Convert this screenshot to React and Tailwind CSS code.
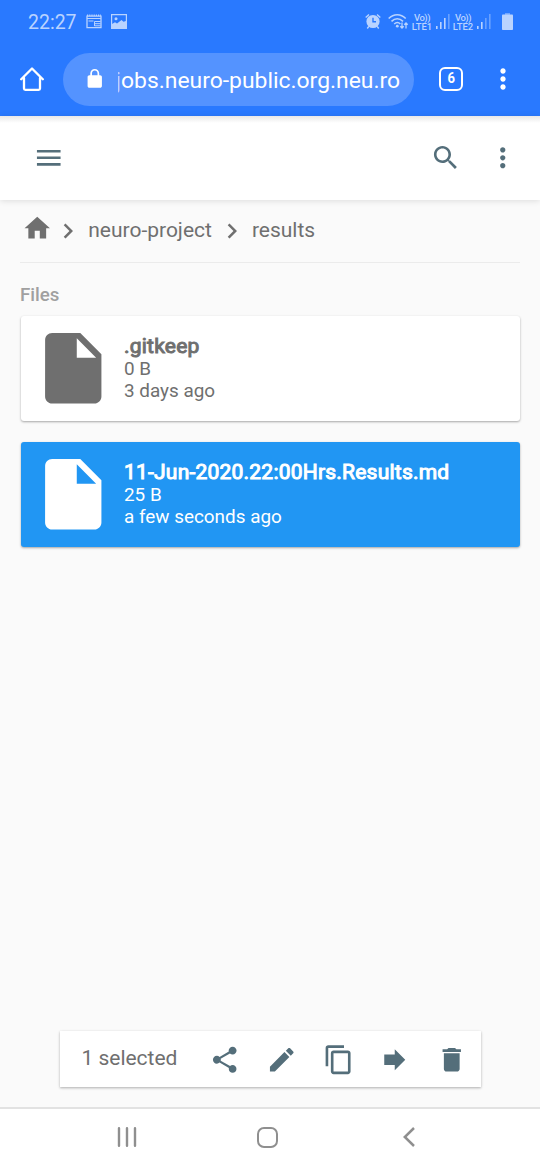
import React from "react";

const PATHS = {
  menu: "M3 18h18v-2H3v2zm0-5h18v-2H3v2zm0-7v2h18V6H3z",
  search:
    "M15.5 14h-.79l-.28-.27C15.41 12.59 16 11.11 16 9.5 16 5.91 13.09 3 9.5 3S3 5.91 3 9.5 5.91 16 9.5 16c1.61 0 3.09-.59 4.23-1.57l.27.28v.79l5 4.99L20.49 19l-4.99-5zm-6 0C7.01 14 5 11.99 5 9.5S7.01 5 9.5 5 14 7.01 14 9.5 11.99 14 9.5 14z",
  more: "M12 8c1.1 0 2-.9 2-2s-.9-2-2-2-2 .9-2 2 .9 2 2 2zm0 2c-1.1 0-2 .9-2 2s.9 2 2 2 2-.9 2-2-.9-2-2-2zm0 6c-1.1 0-2 .9-2 2s.9 2 2 2 2-.9 2-2-.9-2-2-2z",
  home: "M10 20v-6h4v6h5v-8h3L12 3 2 12h3v8z",
  chevron: "M10 6L8.59 7.41 13.17 12l-4.58 4.59L10 18l6-6z",
  file: "M6 2c-1.1 0-1.99.9-1.99 2L4 20c0 1.1.89 2 1.99 2H18c1.1 0 2-.9 2-2V8l-6-6H6zm7 7V3.5L18.5 9H13z",
  share:
    "M18 16.08c-.76 0-1.44.3-1.96.77L8.91 12.7c.05-.23.09-.46.09-.7s-.04-.47-.09-.7l7.05-4.11c.54.5 1.25.81 2.04.81 1.66 0 3-1.34 3-3s-1.34-3-3-3-3 1.34-3 3c0 .24.04.47.09.7L8.04 9.81C7.5 9.31 6.79 9 6 9c-1.66 0-3 1.34-3 3s1.34 3 3 3c.79 0 1.5-.31 2.04-.81l7.12 4.16c-.05.21-.08.43-.08.65 0 1.61 1.31 2.92 2.92 2.92 1.61 0 2.92-1.31 2.92-2.92s-1.31-2.92-2.92-2.92z",
  edit: "M3 17.25V21h3.75L17.81 9.94l-3.75-3.75L3 17.25zM20.71 7.04c.39-.39.39-1.02 0-1.41l-2.34-2.34c-.39-.39-1.02-.39-1.41 0l-1.83 1.83 3.75 3.75 1.83-1.83z",
  copy: "M16 1H4c-1.1 0-2 .9-2 2v14h2V3h12V1zm3 4H8c-1.1 0-2 .9-2 2v14c0 1.1.9 2 2 2h11c1.1 0 2-.9 2-2V7c0-1.1-.9-2-2-2zm0 16H8V7h11v14z",
  forward: "M12 8V4l8 8-8 8v-4H4V8z",
  trash: "M6 19c0 1.1.9 2 2 2h8c1.1 0 2-.9 2-2V7H6v12zM19 4h-3.5l-1-1h-5l-1 1H5v2h14V4z",
  lock: "M18 8h-1V6c0-2.76-2.24-5-5-5S7 3.24 7 6v2H6c-1.1 0-2 .9-2 2v10c0 1.1.9 2 2 2h12c1.1 0 2-.9 2-2V10c0-1.1-.9-2-2-2zM8.9 8V6c0-1.71 1.39-3.1 3.1-3.1s3.1 1.39 3.1 3.1v2z",
};

function Icon({ name, className }) {
  return (
    <svg viewBox="0 0 24 24" fill="currentColor" className={"shrink-0 " + className}>
      <path d={PATHS[name]} fillRule="evenodd" />
    </svg>
  );
}

function Signal({ bars }) {
  return (
    <svg viewBox="0 0 14 15" className="h-[15px] w-[14px] shrink-0" fill="currentColor">
      {[0, 1, 2, 3].map((i) => (
        <rect key={i} x={i * 4} y={12 - i * 4} width="1.6" height={3 + i * 4} opacity={i < bars ? 1 : 0.45} />
      ))}
    </svg>
  );
}

function Carrier({ label }) {
  return (
    <div className="flex w-[20px] flex-col items-center text-[9.5px] leading-[9px] font-medium">
      <span className="tracking-[-0.5px]">Vo))</span>
      <span className="whitespace-nowrap">{label}</span>
    </div>
  );
}

function StatusBar() {
  return (
    <div className="flex h-[43px] items-center pl-7 text-[#b9d3ff]">
      <span className="w-[58px] pt-[3px] text-[19.5px] leading-6">22:27</span>
      <svg viewBox="0 0 16 15" className="h-[15px] w-4 shrink-0" fill="none" stroke="currentColor">
        <path d="M1 2.2h14v11.5H1z" strokeWidth="1.3" />
        <path d="M1 1.2h14" strokeWidth="1.5" strokeDasharray="1.2 1" />
        <path d="M1 4.5h14M2.5 7h5M8.5 7.5h6M8.5 9.7h6M8.5 11.8h6M8.500 7.500v4.500" strokeWidth="1" />
      </svg>
      <svg viewBox="0 0 16 15" className="ml-[9px] h-[15px] w-4 shrink-0" fill="currentColor">
        <path d="M.6.6h14.8v13.800H.6z" fill="none" stroke="currentColor" strokeWidth="1.2" />
        <circle cx="5" cy="4.7" r="1.5" />
        <path d="M1 14v-4l3-1.800 2 1.300 4.500-3.500 2 1.700L15 7v7z" />
      </svg>
      <div className="ml-[238px] flex items-center">
        <svg viewBox="0 0 16 17" className="h-[17px] w-4 shrink-0" fill="none" stroke="currentColor">
          <circle cx="8" cy="8.5" r="6.6" fill="currentColor" stroke="none" />
          <path d="M8 4.8v4h3" stroke="#2979ff" strokeWidth="1.4" />
          <path d="M.7 4.500 4 1.500M15.300 4.500 12 1.500M3.800 13.300l-1.500 2.200M12.200 13.300l1.500 2.200" strokeWidth="1.4" />
        </svg>
        <svg viewBox="0 0 21 17" className="ml-[7px] h-[17px] w-[21px] shrink-0" fill="none" stroke="currentColor" strokeWidth="1.6">
          <path d="M.7 5.500c5-5 12-5 17 0M3.500 8.300c3.500-3.300 8-3.300 11.500 0M6.200 11c2-1.900 4.200-1.900 6.200 0" />
          <circle cx="9.3" cy="13.2" r="1.4" fill="currentColor" stroke="none" />
          <path d="M14 9.500v5.500M12.300 13.300l1.700 1.800 1.700-1.800M18 15.500V10M16.300 11.700 18 9.900l1.700 1.800" strokeWidth="1.3" />
        </svg>
        <div className="ml-[3px]"><Carrier label="LTE1" /></div>
        <div className="ml-[4px]"><Signal bars={3} /></div>
        <div className="ml-[3px]"><Carrier label="LTE2" /></div>
        <div className="ml-[4px]"><Signal bars={2} /></div>
        <svg viewBox="0 0 11 17" className="ml-[11px] h-[17px] w-[11px] shrink-0" fill="currentColor">
          <path d="M3 0h5v2H3z" opacity=".5" />
          <rect y="1.5" width="11" height="15.5" rx=".8" />
        </svg>
      </div>
    </div>
  );
}

function BrowserBar() {
  return (
    <div className="flex h-[73px] items-start pt-[10px] pl-5 text-white">
      <div className="flex h-[52px] w-[43px] items-center">
        <svg viewBox="0 0 24 24" className="h-6 w-6" fill="none" stroke="currentColor" strokeWidth="2.3" strokeLinejoin="round" strokeLinecap="round">
          <path d="M1.200 12.300 12 1.500l10.800 10.800M4 11v10.500q0 1.300 1.300 1.300h13.400q1.300 0 1.300-1.300V11" />
        </svg>
      </div>
      <div className="flex h-[52.5px] w-[351px] items-center rounded-full bg-[#5493ff] pl-[21px]">
        <Icon name="lock" className="-mt-px h-[21.5px] w-[21.5px]" />
        <div className="ml-[12.5px] flex items-center pt-[3px] text-[22.9px] leading-7 whitespace-nowrap">
          <span className="flex w-[3px] justify-end overflow-hidden opacity-60">j</span>
          <span>obs.neuro-public.org.neu.ro</span>
        </div>
      </div>
      <div className="ml-[25px] flex h-[52px] items-center">
        <div className="flex h-6 w-6 items-center justify-center rounded-[6px] border-2 border-white text-[14.5px] leading-none font-bold">
          <span className="scale-x-90">6</span>
        </div>
      </div>
      <div className="ml-[24px] flex h-[52.5px] items-center">
        <Icon name="more" className="h-8 w-8" />
      </div>
    </div>
  );
}

function FileCard({ name, size, date, selected }) {
  return (
    <div
      className={
        "flex h-[105px] rounded-[3px] pt-[10px] pl-[10px] shadow-[0_1px_3px_rgba(0,0,0,0.16),0_1px_2px_rgba(0,0,0,0.2)] " +
        (selected ? "bg-[#2196f3] text-white" : "bg-white text-[#6f6f6f]")
      }
    >
      <Icon name="file" className="ml-[0.4px] h-[84.5px] w-[84.5px]" />
      <div className="ml-[8.1px] pt-[8px]">
        <div className="text-[21px] leading-6 tracking-[0.22px] [-webkit-text-stroke:1px_currentColor]">{name}</div>
        <div className="text-[18.9px] leading-[21.5px]">{size}</div>
        <div className="text-[18.9px] leading-[21.5px]">{date}</div>
      </div>
    </div>
  );
}

export default function App() {
  return (
    <div className="flex h-[1170px] w-[540px] flex-col overflow-hidden bg-[#fafafa] font-['Roboto',sans-serif]">
      <div className="bg-[#2979ff]">
        <StatusBar />
        <BrowserBar />
      </div>
      <header className="flex h-[84px] items-center justify-between bg-white bg-linear-to-b from-[#e8e8e8] to-white to-[7px] pr-[22px] pl-[33.4px] text-[#546e7a] shadow-[0_1px_6px_rgba(0,0,0,0.12)]">
        <Icon name="menu" className="h-[31.5px] w-[31.5px]" />
        <div className="flex gap-[25.5px]">
          <Icon name="search" className="h-[31.5px] w-[31.5px]" />
          <Icon name="more" className="h-[31.5px] w-[31.5px]" />
        </div>
      </header>
      <main className="flex flex-1 flex-col px-5">
        <nav className="flex h-[63px] items-center border-b border-[#ebebeb] pl-[1.5px] text-[21px] text-[#6f6f6f]">
          <Icon name="home" className="-mt-[6px] h-[30.5px] w-[30.5px]" />
          <Icon name="chevron" className="ml-[1.2px] -mt-px h-[30px] w-[30px]" />
          <span className="ml-[5px] w-[124px] whitespace-nowrap">neuro-project</span>
          <Icon name="chevron" className="ml-[5px] -mt-px h-[30px] w-[30px]" />
          <span className="ml-[4.7px]">results</span>
        </nav>
        <h2 className="mt-[20px] h-[33px] text-[18.7px] leading-6 font-medium text-[#a0a0a0]">Files</h2>
        <div className="ml-px flex flex-col gap-[21px]">
          <FileCard name=".gitkeep" size="0 B" date="3 days ago" />
          <FileCard name="11-Jun-2020.22:00Hrs.Results.md" size="25 B" date="a few seconds ago" selected />
        </div>
        <div className="mt-auto mb-[20px] ml-10 flex h-[56px] w-[420.5px] items-center bg-white pl-[21.4px] text-[#546e7a] shadow-[0_1px_3px_rgba(0,0,0,0.16),0_1px_2px_rgba(0,0,0,0.16)]">
          <span className="-mt-px w-[128px] text-[21px] text-[#6f6f6f]">1 selected</span>
          <div className="flex gap-[25.2px] pt-px">
            {["share", "edit", "copy", "forward", "trash"].map((n) => (
              <Icon key={n} name={n} className="h-[31.5px] w-[31.5px]" />
            ))}
          </div>
        </div>
      </main>
      <footer className="flex h-[63px] items-center border-t-2 border-[#e2e2e2] bg-white pb-[5px] pl-[117px] text-[#8f8f8f]">
        <svg viewBox="0 0 20 20" className="h-5 w-5" stroke="currentColor" strokeWidth="2.4" strokeLinecap="round">
          <path d="M2 1.200v17.600M10 1.200v17.600M18 1.200v17.600" />
        </svg>
        <div className="ml-[120px] h-[21px] w-[21px] rounded-[7px] border-2 border-[#8f8f8f]" />
        <svg viewBox="0 0 12 20" className="ml-[124.5px] h-5 w-3" fill="none" stroke="currentColor" strokeWidth="2.5">
          <path d="M11 1 1.800 10 11 19" />
        </svg>
      </footer>
    </div>
  );
}
